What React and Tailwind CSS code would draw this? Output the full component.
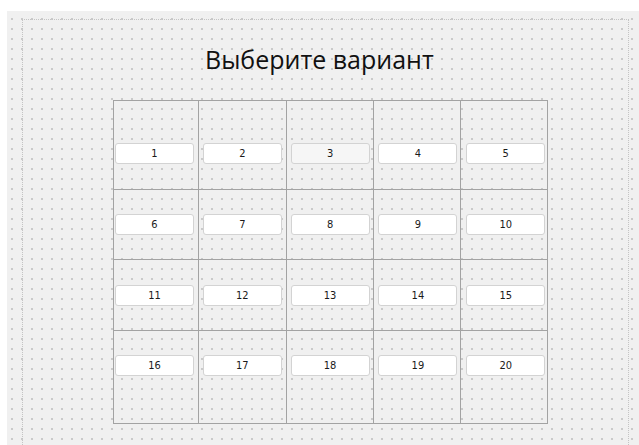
import React from 'react';

// column and row geometry of the variant grid (px, border included)
const COLS = [
  { w: 'w-[84px]', ml: 'ml-[1px]' },
  { w: 'w-[88px]', ml: 'ml-[4px]' },
  { w: 'w-[88px]', ml: 'ml-[4px]' },
  { w: 'w-[87px]', ml: 'ml-[4px]' },
  { w: 'w-[87px]', ml: 'ml-[5px]' },
];

const ROWS = [
  { h: 'h-[88px]', pt: 'pt-[42px]' },
  { h: 'h-[69px]', pt: 'pt-[24px]' },
  { h: 'h-[70px]', pt: 'pt-[25px]' },
  { h: 'h-[92px]', pt: 'pt-[24px]' },
];

const VariantButton = ({ n, className = '' }) => (
  <button
    className={`w-[79px] h-[21px] rounded-[3px] border border-[#d3d3d3] text-[11px] leading-none text-[#1a1a1a] flex items-center justify-center ${
      n === 3 ? 'bg-[#f6f6f6]' : 'bg-white'
    } ${className}`}
    style={{ fontFamily: '"DejaVu Sans", sans-serif', fontStretch: 'condensed' }}
  >
    {n}
  </button>
);

export default function App() {
  return (
    <div className="w-[639px] h-[445px] bg-white pt-[11px] pl-[7px] overflow-hidden">
      <div className="h-[434px] bg-[#f0f0f0] bg-[radial-gradient(circle,#b4b4b4_0.6px,transparent_0.9px)] bg-[size:10px_10px] bg-[position:0px_3px] pt-[8px] pl-[15px]">
        <div className="w-[607px] h-[426px] border-t border-l border-r border-dotted border-[#c4c4c4]">
          <h1
            className="ml-[182px] mt-[22px] h-[35px] text-[25px] leading-[35px] text-[#111]"
            style={{ fontFamily: '"Open Sans", "Noto Sans", sans-serif' }}
          >
            Выберите вариант
          </h1>

          <div className="ml-[90px] mt-[23px] w-[435px] border border-[#a3a3a3]">
            {ROWS.map((row, r) => (
              <div key={r} className={`flex ${r > 0 ? 'border-t border-[#a3a3a3]' : ''}`}>
                {COLS.map((col, c) => (
                  <div
                    key={c}
                    className={`${col.w} ${row.h} ${row.pt} ${c > 0 ? 'border-l border-[#a3a3a3]' : ''}`}
                  >
                    <VariantButton n={r * 5 + c + 1} className={col.ml} />
                  </div>
                ))}
              </div>
            ))}
          </div>
        </div>
      </div>
    </div>
  );
}
